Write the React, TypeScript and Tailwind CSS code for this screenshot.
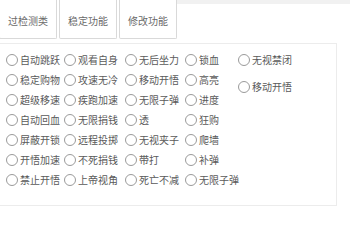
import React from "react";

const cols: { w: string; items: string[] }[] = [
  { w: "w-[58px]", items: ["自动跳跃", "稳定购物", "超级移速", "自动回血", "屏蔽开锁", "开悟加速", "禁止开悟"] },
  { w: "w-[61px]", items: ["观看自身", "攻速无冷", "疾跑加速", "无限捐钱", "远程投掷", "不死捐钱", "上帝视角"] },
  { w: "w-[60px]", items: ["无后坐力", "移动开悟", "无限子弹", "透", "无视夹子", "带打", "死亡不减"] },
  { w: "w-[53px]", items: ["锁血", "高亮", "进度", "狂购", "爬墙", "补弹", "无限子弹"] },
];

function Radio({ label }: { label: string }) {
  return (
    <div className="flex items-center h-[20px] gap-[2px] whitespace-nowrap">
      <span className="w-[12px] h-[12px] rounded-full border border-[#9a9a9a] bg-white shrink-0" />
      <span className="text-[10px] leading-none text-[#5a5a5a]">{label}</span>
    </div>
  );
}

export default function App() {
  return (
    <div
      className="w-[350px] h-[211px] bg-white overflow-hidden"
      style={{ fontFamily: '"Noto Sans CJK SC", "Microsoft YaHei", sans-serif' }}
    >
      <div className="flex h-[39px]">
        <div className="flex gap-[2px] -ml-px">
          {["过检测类", "稳定功能", "修改功能"].map((t) => (
            <div
              key={t}
              className="w-[58px] h-[39px] border border-t-0 border-[#d9d9d9] rounded-b-[2px] flex items-center justify-center pt-[3px] text-[10px] text-[#6a6a6a] bg-white"
            >
              {t}
            </div>
          ))}
        </div>
        <div className="flex-1 border-t-[4px] border-[#f1f1f1]" />
      </div>
      <div className="mt-[4px] -ml-px w-[338px] h-[163px] border border-[#ececec] pl-[6px] pt-[6px] flex">
        {cols.map((c, i) => (
          <div key={i} className={`${c.w} flex flex-col`}>
            {c.items.map((it) => (
              <Radio key={it + i} label={it} />
            ))}
          </div>
        ))}
        <div className="flex flex-col gap-[7px]">
          <Radio label="无视禁闭" />
          <Radio label="移动开悟" />
        </div>
      </div>
    </div>
  );
}
